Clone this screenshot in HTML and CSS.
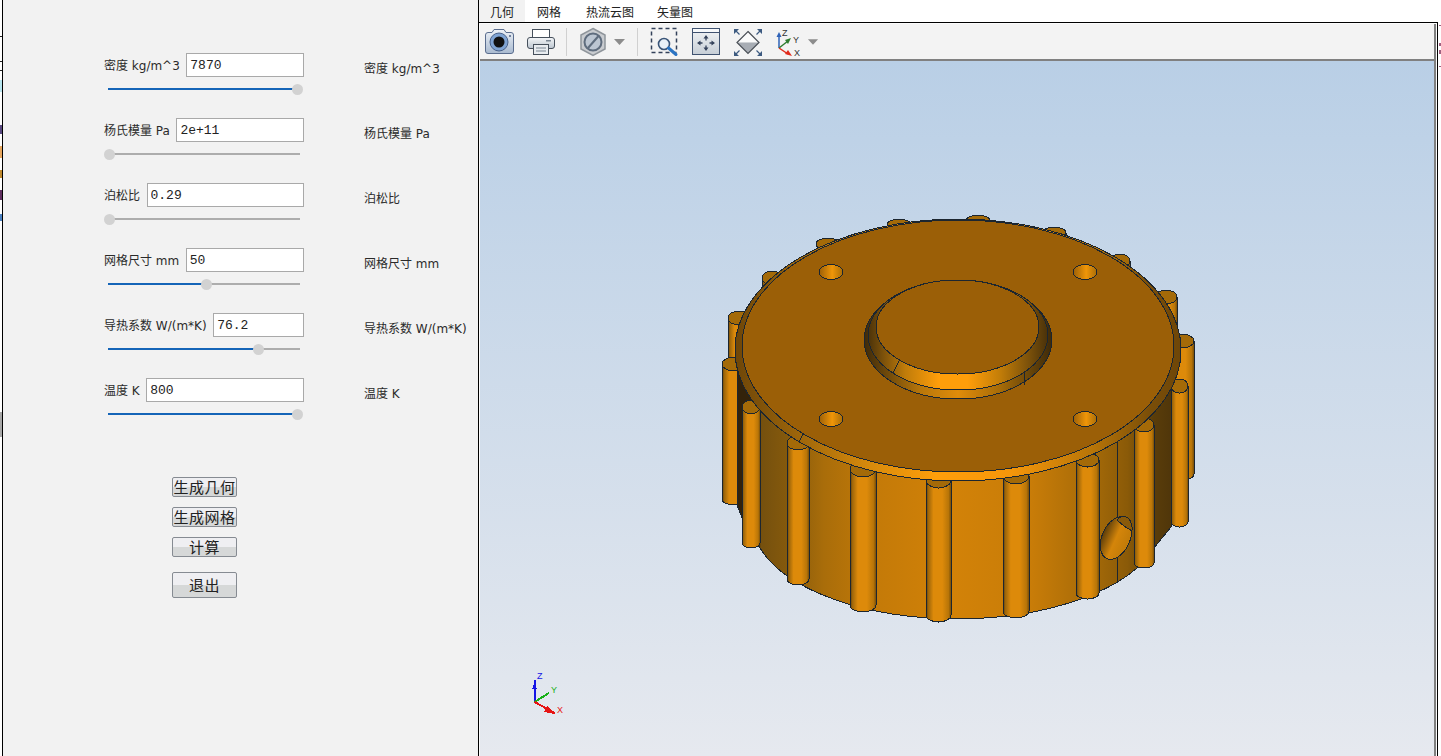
FILE: index.html
```html
<!DOCTYPE html>
<html lang="zh">
<head>
<meta charset="utf-8">
<title>几何</title>
<link rel="stylesheet" href="styles.css">
</head>
<body>
<div class="app">
  <div class="edge edge-left"></div>
  <aside class="panel">
    <div class="rows">
      <div class="row">
        <div class="field">
          <div class="field-line"><label class="lbl">密度 kg/m^3</label><input class="num" value="7870"></div>
          <div class="slider"><div class="fill" style="width:189px"></div><div class="thumb" style="left:184px"></div></div>
        </div>
        <span class="lbl echo">密度 kg/m^3</span>
      </div>
      <div class="row">
        <div class="field">
          <div class="field-line"><label class="lbl">杨氏模量 Pa</label><input class="num" value="2e+11"></div>
          <div class="slider"><div class="thumb" style="left:-4px"></div></div>
        </div>
        <span class="lbl echo">杨氏模量 Pa</span>
      </div>
      <div class="row">
        <div class="field">
          <div class="field-line"><label class="lbl">泊松比</label><input class="num" value="0.29"></div>
          <div class="slider"><div class="thumb" style="left:-4px"></div></div>
        </div>
        <span class="lbl echo">泊松比</span>
      </div>
      <div class="row">
        <div class="field">
          <div class="field-line"><label class="lbl">网格尺寸 mm</label><input class="num" value="50"></div>
          <div class="slider"><div class="fill" style="width:98px"></div><div class="thumb" style="left:93px"></div></div>
        </div>
        <span class="lbl echo">网格尺寸 mm</span>
      </div>
      <div class="row">
        <div class="field">
          <div class="field-line"><label class="lbl">导热系数 W/(m*K)</label><input class="num" value="76.2"></div>
          <div class="slider"><div class="fill" style="width:150px"></div><div class="thumb" style="left:145px"></div></div>
        </div>
        <span class="lbl echo">导热系数 W/(m*K)</span>
      </div>
      <div class="row">
        <div class="field">
          <div class="field-line"><label class="lbl">温度 K</label><input class="num" value="800"></div>
          <div class="slider"><div class="fill" style="width:189px"></div><div class="thumb" style="left:184px"></div></div>
        </div>
        <span class="lbl echo">温度 K</span>
      </div>
    </div>
    <div class="actions">
      <button class="btn">生成几何</button>
      <button class="btn">生成网格</button>
      <button class="btn">计算</button>
      <button class="btn btn-exit">退出</button>
    </div>
  </aside>
  <main class="main">
    <nav class="tabs">
      <span class="tab tab-active">几何</span>
      <span class="tab">网格</span>
      <span class="tab">热流云图</span>
      <span class="tab">矢量图</span>
    </nav>
    <div class="frame">
      <div class="inner">
        <div class="toolbar">
          <svg class="ico" viewBox="0 0 30 30">
            <defs><linearGradient id="camB" x1="0" y1="0" x2="0" y2="1"><stop offset="0" stop-color="#eef2f7"/><stop offset="1" stop-color="#a9bad0"/></linearGradient></defs>
            <path d="M7 5.500 L9 2.500 H19 L21 5.500 H26 Q28.500 5.500 28.500 8 V24 Q28.500 26.500 26 26.500 H3 Q0.500 26.500 0.500 24 V8 Q0.500 5.500 3 5.500 Z" fill="url(#camB)" stroke="#5a6d8e"/>
            <circle cx="14" cy="15" r="9" fill="#7fa3d2" stroke="#48618a"/>
            <circle cx="14" cy="15" r="5.500" fill="#111"/>
            <circle cx="25" cy="9" r="1" fill="#4c5f80"/>
          </svg>
          <svg class="ico" viewBox="0 0 30 30">
            <defs><linearGradient id="prB" x1="0" y1="0" x2="0" y2="1"><stop offset="0" stop-color="#f4f6f8"/><stop offset="1" stop-color="#bcc6d0"/></linearGradient></defs>
            <rect x="6.500" y="2.500" width="17" height="8" fill="#fff" stroke="#46505c"/>
            <rect x="1.500" y="10.500" width="27" height="11" rx="2.500" fill="url(#prB)" stroke="#46505c"/>
            <rect x="20" y="13" width="5" height="1.500" fill="#7b8794"/>
            <rect x="7.500" y="17.500" width="15" height="10" fill="#e8ecf0" stroke="#46505c"/>
            <path d="M10 21 H20 M10 24 H20" stroke="#7b8794"/>
          </svg>
          <span class="sep"></span>
          <svg class="ico ico-hex" viewBox="0 0 28 30">
            <path d="M14 1.500 L26 8 V22 L14 28.500 L2 22 V8 Z" fill="#c9ccd0" stroke="#8f959b" stroke-width="1.500"/>
            <circle cx="14" cy="15" r="8.500" fill="#bcc6d2" stroke="#5f6d7e" stroke-width="2"/>
            <path d="M9 21 L19.500 9" stroke="#5f6d7e" stroke-width="2"/>
          </svg>
          <svg class="caret" viewBox="0 0 13 6"><path d="M1 0 H12 L6.500 6 Z" fill="#8c8c8c"/></svg>
          <span class="sep sep-b"></span>
          <svg class="ico" viewBox="0 0 30 30">
            <rect x="1.500" y="1.500" width="25" height="24" fill="none" stroke="#33415a" stroke-width="1.500" stroke-dasharray="4 3"/>
            <circle cx="14" cy="17" r="5.500" fill="#e8f0f8" stroke="#3a5578" stroke-width="1.600"/>
            <path d="M18.500 21 L26 27.500" stroke="#2a74c4" stroke-width="3" stroke-linecap="round"/>
          </svg>
          <svg class="ico" viewBox="0 0 30 30">
            <defs><linearGradient id="fitB" x1="0" y1="0" x2="0" y2="1"><stop offset="0" stop-color="#f2f4f6"/><stop offset="1" stop-color="#c6ced6"/></linearGradient></defs>
            <rect x="1.500" y="1.500" width="27" height="26" fill="url(#fitB)" stroke="#3f5270"/>
            <rect x="2" y="2" width="26" height="3" fill="#f6f8fa"/>
            <path d="M2 5.500 H28" stroke="#3f5270"/>
            <path d="M15 11 V13.500 M15 18.500 V21 M8.500 16 H11.500 M18.500 16 H21.500" stroke="#33415a" stroke-width="1.300"/>
            <path d="M15 8 L12.500 11.500 H17.500 Z M15 24 L12.500 20.500 H17.500 Z M6 16 L9.500 13.500 V18.500 Z M24 16 L20.500 13.500 V18.500 Z" fill="#33415a"/>
          </svg>
          <svg class="ico" viewBox="0 0 30 30">
            <path d="M5 15.500 L16 4.500 L27 15.500 Z" fill="#fbfbfb"/>
            <path d="M5 15.500 L16 26.500 L27 15.500 Z" fill="#a8adb4"/>
            <path d="M16 4.500 L27 15.500 L16 26.500 L5 15.500 Z" fill="none" stroke="#4a4f56" stroke-width="1.200"/>
            <path d="M4 4 L7.500 7.500 M28 4 L24.500 7.500 M4 27 L7.500 23.500 M28 27 L24.500 23.500" stroke="#3c5a80" stroke-width="1.200"/>
            <path d="M2 2 H7 L2 7 Z M30 2 H25 L30 7 Z M2 29 H7 L2 24 Z M30 29 H25 L30 24 Z" fill="#3c5a80"/>
          </svg>
          <svg class="ico ico-xyz" viewBox="0 0 30 30">
            <path d="M6 21 V8" stroke="#2f63b8" stroke-width="1.500"/>
            <path d="M6 5 L3.500 10 H8.500 Z" fill="#2f63b8"/>
            <path d="M6 21 L15 14" stroke="#2f7d2f" stroke-width="1.500"/>
            <path d="M18 11 L12 13 L15 17 Z" fill="#2f7d2f"/>
            <path d="M6 21 L15 27" stroke="#e02a1c" stroke-width="1.500"/>
            <path d="M19 29 L12 27 L15 23 Z" fill="#e02a1c"/>
            <text class="xyz-t" x="9" y="9">Z</text>
            <text class="xyz-t" x="20" y="16">Y</text>
            <text class="xyz-t" x="21" y="29">X</text>
          </svg>
          <svg class="caret caret-b" viewBox="0 0 13 6"><path d="M1 0 H12 L6.500 6 Z" fill="#8c8c8c"/></svg>
        </div>
        <div class="viewport">
          <svg class="scene" viewBox="480 61 955 695">
            <defs>
              <linearGradient id="tube" x1="0" y1="0" x2="1" y2="0">
                <stop offset="0" stop-color="#4a300a"/>
                <stop offset=".08" stop-color="#9a640a"/>
                <stop offset=".3" stop-color="#dd8a0a"/>
                <stop offset=".65" stop-color="#dd8a0a"/>
                <stop offset=".9" stop-color="#b87508"/>
                <stop offset="1" stop-color="#7a4f08"/>
              </linearGradient>
              <linearGradient id="wall" gradientUnits="userSpaceOnUse" x1="737" y1="0" x2="1171" y2="0">
                <stop offset="0" stop-color="#33220a"/>
                <stop offset=".05" stop-color="#33220a"/>
                <stop offset=".055" stop-color="#75500e"/>
                <stop offset=".12" stop-color="#865a0c"/>
                <stop offset=".2" stop-color="#a96d0a"/>
                <stop offset=".32" stop-color="#c47a08"/>
                <stop offset=".5" stop-color="#d28208"/>
                <stop offset=".68" stop-color="#c87c08"/>
                <stop offset=".82" stop-color="#a56a08"/>
                <stop offset=".9" stop-color="#8a5a08"/>
                <stop offset=".96" stop-color="#5a3d0a"/>
                <stop offset="1" stop-color="#50360a"/>
              </linearGradient>
              <linearGradient id="rim" gradientUnits="userSpaceOnUse" x1="735" y1="0" x2="1181" y2="0">
                <stop offset="0" stop-color="#6e4608"/>
                <stop offset=".12" stop-color="#95600a"/>
                <stop offset=".3" stop-color="#d68a0c"/>
                <stop offset=".45" stop-color="#ff9e0a"/>
                <stop offset=".62" stop-color="#f5960a"/>
                <stop offset=".8" stop-color="#b87508"/>
                <stop offset=".93" stop-color="#7a4e08"/>
                <stop offset="1" stop-color="#6e4608"/>
              </linearGradient>
              <linearGradient id="boss" gradientUnits="userSpaceOnUse" x1="864" y1="0" x2="1052" y2="0">
                <stop offset="0" stop-color="#3e2a0a"/>
                <stop offset=".1" stop-color="#7a500a"/>
                <stop offset=".22" stop-color="#c07c0a"/>
                <stop offset=".4" stop-color="#ff9e0a"/>
                <stop offset=".55" stop-color="#ff9e0a"/>
                <stop offset=".72" stop-color="#c47e08"/>
                <stop offset=".88" stop-color="#7a500a"/>
                <stop offset="1" stop-color="#3e2a0a"/>
              </linearGradient>
              <linearGradient id="bossLow" gradientUnits="userSpaceOnUse" x1="864" y1="0" x2="1052" y2="0">
                <stop offset="0" stop-color="#3e2a0a"/>
                <stop offset=".15" stop-color="#7a500a"/>
                <stop offset=".3" stop-color="#b8760a"/>
                <stop offset=".5" stop-color="#e08c0a"/>
                <stop offset=".72" stop-color="#a86c08"/>
                <stop offset=".88" stop-color="#6a4608"/>
                <stop offset="1" stop-color="#3e2a0a"/>
              </linearGradient>
              <linearGradient id="hole" x1="0" y1="0" x2="1" y2="0">
                <stop offset="0" stop-color="#9b5f07"/>
                <stop offset=".55" stop-color="#f09608"/>
                <stop offset="1" stop-color="#a86c08"/>
              </linearGradient>
              <linearGradient id="bore" x1="0" y1="0.500" x2="1" y2="0.500">
                <stop offset="0" stop-color="#5a3c0a"/>
                <stop offset=".5" stop-color="#d4850a"/>
                <stop offset="1" stop-color="#c07a08"/>
              </linearGradient>
            </defs>

            <g fill="url(#tube)" stroke="#1c2630" stroke-width="1">
              <path d="M1155 297 V450 H1177 V297 Z"/>
              <path d="M1110 261 V400 H1130 V261 Z"/>
              <path d="M1043 233 V300 H1066 V233 Z"/>
              <path d="M966 221 V280 H990 V221 Z"/>
              <path d="M887 225 V300 H912 V225 Z"/>
              <path d="M817 244 V340 H840 V244 Z"/>
              <path d="M762 278 V420 H783 V278 Z"/>
              <path d="M728 318 V470 H750 V318 Z"/>
              <path d="M722 364 V499 A12 6 0 0 0 746 499 V364 Z"/>
              <path d="M1170 341 V474 A12 6 0 0 0 1194 474 V341 Z"/>
            </g>
            <g fill="#a46a08" stroke="#1c2630" stroke-width="1">
              <ellipse cx="1166" cy="297" rx="11" ry="7"/>
              <ellipse cx="1120" cy="261" rx="10" ry="7"/>
              <ellipse cx="1054" cy="233" rx="12" ry="6"/>
              <ellipse cx="978" cy="221" rx="12" ry="6"/>
              <ellipse cx="899" cy="225" rx="12" ry="6"/>
              <ellipse cx="828" cy="244" rx="12" ry="6"/>
              <ellipse cx="772" cy="278" rx="10" ry="7"/>
              <ellipse cx="739" cy="318" rx="11" ry="7"/>
              <ellipse cx="734" cy="364" rx="12" ry="7"/>
              <ellipse cx="1182" cy="341" rx="12" ry="7"/>
            </g>

            <path d="M737 340 V505 L745 525 L760 548 A205 98 0 0 0 1154 548 L1171 527 V340 Z" fill="url(#wall)" stroke="#1c2630" stroke-width="1"/>
            <path d="M1117 440 V520 M1117 558 V581" stroke="#1c2630" stroke-width="1"/>
            <ellipse cx="1116" cy="538" rx="14" ry="22.500" transform="rotate(24 1116 538)" fill="url(#bore)" stroke="#1c2630" stroke-width="1"/>
            <path d="M1117 520 Q1122 514 1128 518 Q1133 523 1132 531 Q1124 527 1117 520 Z" fill="#8a5a0a" stroke="#1c2630" stroke-width="1"/>

            <g fill="url(#tube)" stroke="#1c2630" stroke-width="1">
              <path d="M742 407 V543 A9 5 0 0 0 760 543 V407 Z"/>
              <path d="M787 443 V579 A11 6 0 0 0 809 579 V443 Z"/>
              <path d="M850 469 V605 A13 7 0 0 0 876 605 V469 Z"/>
              <path d="M926 480 V615 A12.500 7 0 0 0 951 615 V480 Z"/>
              <path d="M1003 476 V611 A13 7 0 0 0 1029 611 V476 Z"/>
              <path d="M1076 460 V593 A11.500 6 0 0 0 1099 593 V460 Z"/>
              <path d="M1134 425 V563 A10 5 0 0 0 1154 563 V425 Z"/>
              <path d="M1171 386 V522 A8.500 5 0 0 0 1188 522 V386 Z"/>
            </g>
            <g fill="#a46a08" stroke="#1c2630" stroke-width="1">
              <ellipse cx="751" cy="407" rx="9" ry="7"/>
              <ellipse cx="798" cy="443" rx="11" ry="7"/>
              <ellipse cx="863" cy="469" rx="13" ry="8"/>
              <ellipse cx="938.500" cy="480" rx="12.500" ry="8"/>
              <ellipse cx="1016" cy="476" rx="13" ry="8"/>
              <ellipse cx="1087.500" cy="460" rx="11.500" ry="7"/>
              <ellipse cx="1144" cy="425" rx="10" ry="7"/>
              <ellipse cx="1179.500" cy="386" rx="8.500" ry="7"/>
            </g>

            <ellipse cx="958" cy="350" rx="223" ry="131" fill="url(#rim)" stroke="#1c2630" stroke-width="1"/>
            <ellipse cx="958" cy="346" rx="216" ry="126" fill="#9b5f07" stroke="#1c2630" stroke-width="1"/>
            <path d="M799 442 L803 434" stroke="#1c2630" stroke-width="1"/>

            <g fill="url(#hole)" stroke="#1c2630" stroke-width="1">
              <ellipse cx="831" cy="272" rx="12" ry="7.500"/>
              <ellipse cx="1085" cy="272" rx="12" ry="7.500"/>
              <ellipse cx="831" cy="419" rx="12" ry="7.500"/>
              <ellipse cx="1085" cy="419" rx="12" ry="7.500"/>
            </g>

            <ellipse cx="958" cy="340" rx="94" ry="59" fill="url(#bossLow)" stroke="#1c2630" stroke-width="1"/>
            <ellipse cx="958" cy="335" rx="90" ry="55" fill="url(#boss)" stroke="#1c2630" stroke-width="1"/>
            <path d="M893 373 L899 361 M1024 373 V385" stroke="#1c2630" stroke-width="1"/>
            <ellipse cx="957.500" cy="327" rx="81.500" ry="47" fill="#9b5f07" stroke="#1c2630" stroke-width="1"/>

            <path d="M534.500 702 V680" stroke="#1414e6" stroke-width="2"/>
            <path d="M534.500 682 L532 689 H537 Z" fill="#1414e6"/>
            <path d="M534.500 702 L549 693" stroke="#18b018" stroke-width="2"/>
            <path d="M534.500 702 L555 713" stroke="#e61414" stroke-width="2"/>
            <path d="M555 714 L544 712 L547 706 Z" fill="#e61414"/>
            <text class="axis axis-z" x="537" y="679">Z</text>
            <text class="axis axis-y" x="551" y="693">Y</text>
            <text class="axis axis-x" x="557" y="713">X</text>
          </svg>
        </div>
      </div>
    </div>
  </main>
  <div class="edge edge-right"></div>
</div>
</body>
</html>
```
FILE: styles.css
```css
* { box-sizing: border-box; }
html, body { margin: 0; padding: 0; height: 100%; overflow: hidden; background: #fff; }
body { font-family: "DejaVu Sans", "Noto Sans CJK SC", sans-serif; font-size: 12px; color: #222; }

.app { display: flex; width: 1441px; height: 756px; }

.edge { flex: none; }
.edge-left {
  width: 2px;
  background: linear-gradient(180deg,
    #fff 0 36px, #222 36px 37px, #fff 37px 61px, #222 61px 62px, #fff 62px 70px, #222 70px 71px,
    #fff 71px 80px, #b8e6f0 80px 92px, #fff 92px 125px, #5a4a80 125px 134px, #fff 134px 146px,
    #e8a860 146px 158px, #fff 158px 170px, #c08a30 170px 178px, #fff 178px 190px, #603060 190px 200px,
    #fff 200px 214px, #4a80c0 214px 221px, #fff 221px 412px, #a8a8a8 412px 437px, #fff 437px 756px);
}
.edge-right {
  width: 3px;
  background: linear-gradient(90deg, #fff 0 1px, transparent 1px),
    linear-gradient(180deg,
    #fff 0 25px, #a06080 25px 26px, #fff 26px 43px, #a06080 43px 46px, #fff 46px 50px, #a06080 50px 54px,
    #fff 54px 66px, #a06080 66px 67px, #fff 67px 756px);
}

.panel {
  flex: none;
  width: 477px;
  background: #f2f2f2;
  border-left: 1px solid #000;
  border-right: 1px solid #000;
  padding: 53px 0 0 101px;
}

.rows { display: flex; flex-direction: column; gap: 22px; }
.row { display: flex; align-items: flex-start; gap: 60px; height: 43px; }
.field { width: 200px; flex: none; display: flex; flex-direction: column; }
.field-line { display: flex; align-items: center; gap: 6.500px; height: 24px; margin-bottom: 11px; }
.lbl { white-space: nowrap; font-size: 12px; line-height: 16px; color: #2a2a2a; position: relative; top: 1px; }
.echo { top: 8px; }
.num {
  flex: 1;
  min-width: 0;
  height: 24px;
  padding: 1px 3px 0;
  border: 1px solid #a9a9a9;
  background: #fff;
  font-family: "Liberation Mono", "DejaVu Sans Mono", monospace;
  font-size: 13px;
  color: #222;
  outline: none;
}

.slider { position: relative; width: 192px; height: 2px; margin-left: 4px; background: #adadad; }
.fill { height: 2px; background: #1565b8; }
.thumb {
  position: absolute;
  top: -4px;
  width: 11px;
  height: 11px;
  border-radius: 50%;
  background: #d2d2d2;
}

.actions { display: flex; flex-direction: column; align-items: flex-start; margin: 56px 0 0 68px; }
.btn {
  width: 65px;
  height: 20px;
  padding: 0;
  margin-bottom: 10px;
  border: 1px solid #868b92;
  border-radius: 2px;
  background: linear-gradient(180deg, #efeff2 0 50%, #d6d8d8 50% 100%);
  font-family: "Noto Sans CJK SC", sans-serif;
  font-size: 15px;
  letter-spacing: .5px;
  line-height: 18px;
  color: #222;
}
.btn-exit { height: 26px; margin: 5px 0 0; }

.main { flex: 1; min-width: 0; display: flex; flex-direction: column; }

.tabs { flex: none; display: flex; height: 22px; background: #fff; }
.tab { padding: 0 13px 0 12px; line-height: 23px; font-size: 12px; color: #222; white-space: nowrap; font-family: "Noto Sans CJK SC", sans-serif; }
.tab-active { background: #f2f2f2; padding: 0 11px; }
.tab:last-child { padding-left: 10px; }

.frame { flex: 1; min-height: 0; border-top: 1px solid #000; border-right: 1px solid #000; padding: 1px 1px 0 1px; background: #fbfbfb; }
.inner { display: flex; flex-direction: column; height: 100%; border-right: 2px solid #808080; }

.toolbar {
  flex: none;
  display: flex;
  align-items: center;
  height: 37px;
  padding-left: 5px;
  background: #f3f3f3;
  border-bottom: 2px solid #808080;
}
.ico { flex: none; width: 30px; height: 30px; margin-right: 11px; }
.ico-hex { width: 28px; margin-right: 6px; }
.ico-xyz { margin-right: 4px; }
.caret { flex: none; width: 13px; height: 6px; }
.caret-b { width: 12px; }
.sep { flex: none; width: 1px; height: 28px; background: #d0d0d0; margin: 0 12px 0 -1px; }
.sep-b { margin: 0 12px 0 11px; }
.xyz-t { font-family: "Liberation Sans", sans-serif; font-size: 9px; fill: #333; }

.viewport { flex: 1; min-height: 0; background: linear-gradient(180deg, #b9cfe6 0%, #e6e9ef 100%); }
.scene { display: block; width: 955px; height: 695px; shape-rendering: crispEdges; }
.axis { font-family: "Liberation Sans", sans-serif; font-size: 9px; }
.axis-z { fill: #1414e6; }
.axis-y { fill: #18b018; }
.axis-x { fill: #e61414; }
```
